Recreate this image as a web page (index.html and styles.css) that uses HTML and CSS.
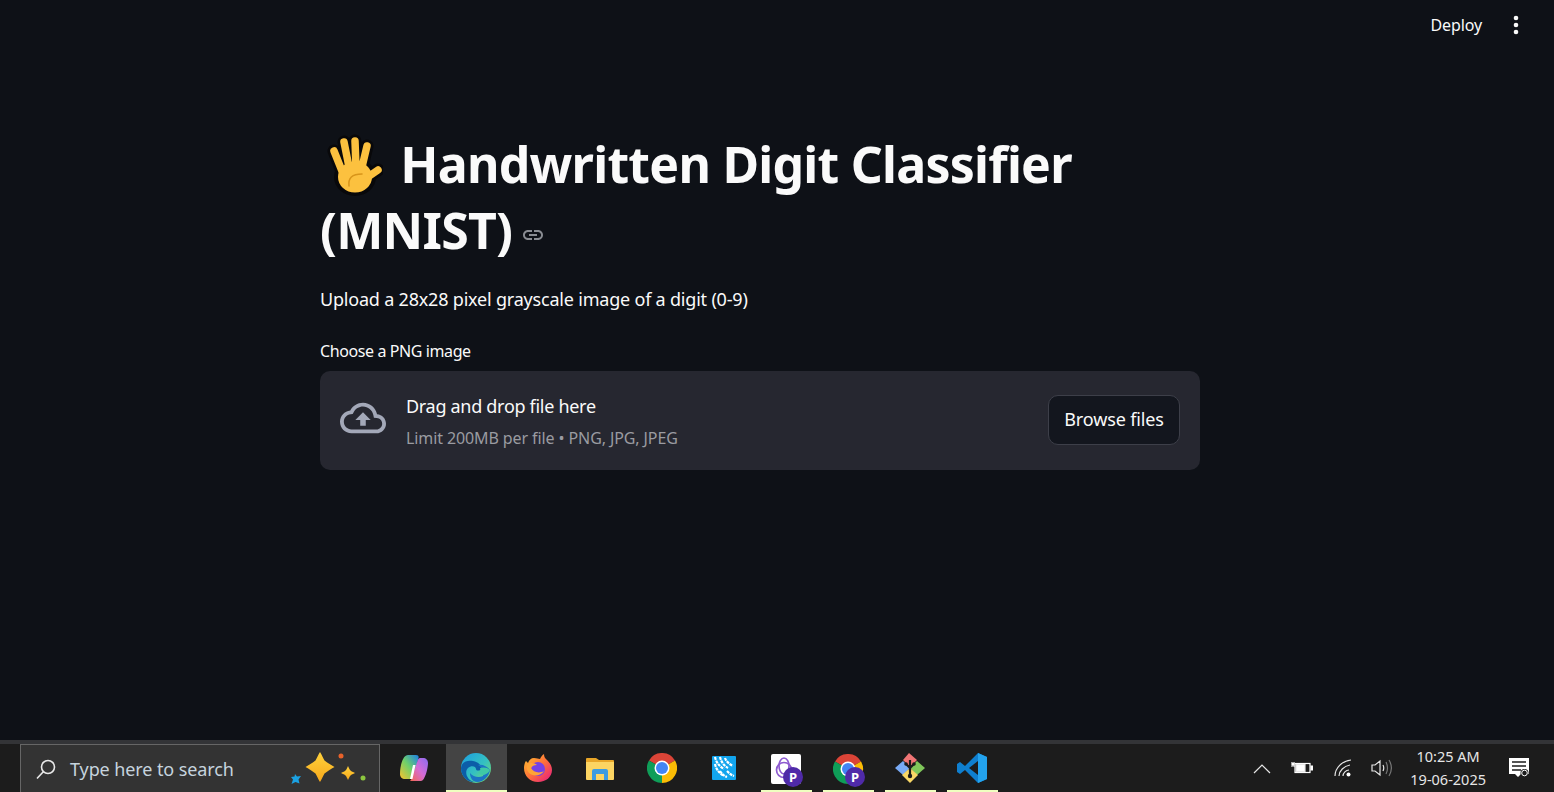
FILE: index.html
```html
<!DOCTYPE html>
<html lang="en">
<head>
  <meta charset="UTF-8" />
  <title>Handwritten Digit Classifier</title>
  <link rel="stylesheet" href="styles.css">
</head>
<body>

<div class="app">
  <div class="page">
    <header class="topbar">
      <span class="deploy">Deploy</span>
      <svg class="kebab" width="8" height="20" viewBox="0 0 8 20"><circle cx="4" cy="3" r="2.3"/><circle cx="4" cy="10" r="2.3"/><circle cx="4" cy="17" r="2.3"/></svg>
    </header>

    <main class="container">
      <h1>
        <svg class="hand" width="56" height="64" viewBox="0 0 56 64">
          <g fill="none" stroke="#08080a" stroke-width="13" stroke-linecap="round">
            <path d="M7 17 15 37M17 8 22 33M28 7 29 33M40 12 35 33M51 36 38 45"/>
          </g>
          <ellipse cx="28" cy="43" rx="21" ry="19" fill="#08080a"/>
          <g fill="none" stroke="#fcc13f" stroke-width="7.5" stroke-linecap="round">
            <path d="M7 17 15 37M17 8 22 33M28 7 29 33M40 12 35 33M51 36 38 45"/>
          </g>
          <ellipse cx="28" cy="43" rx="17" ry="15.500" fill="#fcc13f"/>
          <path d="M22 52c-1-8 3-12 13-12" fill="none" stroke="#d8951a" stroke-width="1.500" stroke-linecap="round"/>
        </svg>
        Handwritten Digit Classifier (MNIST)
        <svg class="anchor" width="24" height="24" viewBox="0 0 24 24"><path d="M3.9 12c0-1.71 1.39-3.1 3.1-3.1h4V7H7c-2.76 0-5 2.24-5 5s2.24 5 5 5h4v-1.9H7c-1.71 0-3.1-1.39-3.1-3.1zM8 13h8v-2H8v2zm9-6h-4v1.9h4c1.71 0 3.1 1.39 3.1 3.1s-1.39 3.1-3.1 3.1h-4V17h4c2.76 0 5-2.24 5-5s-2.24-5-5-5z"/></svg>
      </h1>
      <p class="intro">Upload a 28x28 pixel grayscale image of a digit (0-9)</p>

      <label class="upload-label">Choose a PNG image</label>
      <section class="dropzone">
        <svg class="cloud" width="46" height="46" viewBox="0 0 24 24"><path d="M19.35 10.04C18.67 6.59 15.64 4 12 4 9.11 4 6.6 5.64 5.35 8.04 2.34 8.36 0 10.91 0 14c0 3.31 2.69 6 6 6h13c2.76 0 5-2.24 5-5 0-2.64-2.05-4.78-4.65-4.96zM19 18H6c-2.21 0-4-1.79-4-4 0-2.05 1.53-3.76 3.56-3.97l1.07-.11.5-.95C8.08 7.14 9.94 6 12 6c2.62 0 4.88 1.86 5.39 4.43l.3 1.5 1.53.11c1.56.1 2.78 1.41 2.78 2.96 0 1.65-1.35 3-3 3zM8 13h2.55v3h2.9v-3H16l-4-4z"/></svg>
        <div class="drop-text">
          <div class="drop-title">Drag and drop file here</div>
          <div class="drop-limit">Limit 200MB per file • PNG, JPG, JPEG</div>
        </div>
        <button class="browse">Browse files</button>
      </section>
    </main>
  </div>

  <footer class="taskbar">
    <div class="search">
      <svg class="search-icon" width="22" height="22" viewBox="0 0 22 22"><circle cx="13" cy="9" r="6.500"/><path d="M8.500 13.500 2 20.500"/></svg>
      <span class="search-text">Type here to search</span>
      <svg class="sparkles" width="76" height="36" viewBox="0 0 76 36">
        <defs>
          <linearGradient id="star" x1="0" y1="0" x2="0" y2="1"><stop offset="0" stop-color="#ffd23c"/><stop offset="1" stop-color="#f7a81b"/></linearGradient>
        </defs>
        <path d="M30 1c2 3 3 6 4.500 8.500C37 11.500 41 14 44.500 16c-3.500 2-7.500 4.500-10 6.500C33 25 32 28 30 31c-2-3-3-6-4.500-8.500C23 20.500 19 18 15.500 16c3.500-2 7.500-4.500 10-6.500C27 7 28 4 30 1z" fill="url(#star)"/>
        <path d="M58 15c1 2 1.500 3.500 2.500 4.500 1 1 2.500 1.500 4.500 2.500-2 1-3.500 1.500-4.500 2.500-1 1-1.500 2.500-2.500 4.500-1-2-1.500-3.500-2.500-4.500-1-1-2.500-1.500-4.500-2.500 2-1 3.500-1.500 4.500-2.500 1-1 1.500-2.500 2.500-4.500z" fill="url(#star)"/>
        <path d="M5 23l2 2.500 4-.5-2.500 3.500 1 4-4-1.500-4 2 1.500-4.500-2-2.500 3.500-.5z" fill="#1ba1e2"/>
        <circle cx="51" cy="5" r="2.500" fill="#e8622a"/>
        <circle cx="73" cy="27" r="2.500" fill="#8cc63f"/>
      </svg>
    </div>

    <div class="apps">
      <div class="app-icon">
        <svg width="30" height="28" viewBox="0 0 30 28">
          <defs>
            <linearGradient id="cp1" x1="0" y1="1" x2="1" y2="0"><stop offset="0" stop-color="#f9c22e"/><stop offset=".5" stop-color="#6fd06a"/><stop offset="1" stop-color="#1b7fe8"/></linearGradient>
            <linearGradient id="cp2" x1="0" y1="1" x2="1" y2="0"><stop offset="0" stop-color="#f2664d"/><stop offset=".5" stop-color="#d56bd6"/><stop offset="1" stop-color="#8a6cf0"/></linearGradient>
          </defs>
          <path d="M9 1h8c2 0 3 1 2.500 3L15 22c-.5 2-2 3-4 3H6c-3 0-5-2-5-5C1 11 4 1 9 1z" fill="url(#cp1)"/>
          <path d="M13 27h9c4 0 7-13 7-18 0-3-2-5-5-5h-3c-1 0-2 1-2.500 3L13 23c-.5 2-1 3-2 4z" fill="url(#cp2)"/>
          <path d="M14 11h2.500l-3 14H11z" fill="#fff"/>
        </svg>
      </div>
      <div class="app-icon active">
        <svg class="edge" width="30" height="30" viewBox="0 0 30 30">
          <defs>
            <linearGradient id="edge1" x1="0" y1="0" x2="1" y2="1"><stop offset="0" stop-color="#1b9de2"/><stop offset=".55" stop-color="#35c1c0"/><stop offset="1" stop-color="#7fe05f"/></linearGradient>
          </defs>
          <circle cx="15" cy="15" r="15" fill="url(#edge1)"/>
          <path d="M0 15C1 8 7 7 12 8c6 1 9 5 8 8-1 2-5 2-5 0 0-3-5-4-8-1-4 4-1 12 6 14C6 29 0 23 0 15z" fill="#0c5da8"/>
          <path d="M17 12c4-1 9 1 12 5-1 6-6 12-13 12-4 0-7-4-7-9 3 4 9 5 13 3 2-3-1-9-5-11z" fill="#1c74c4"/>
          <path d="M19 15c3-1 7-1 10 2-1 2-3 4-6 5-3 0-5-1-6-3 2 0 3-2 2-4z" fill="#3fc9a5"/>
        </svg>
      </div>
      <div class="app-icon">
        <svg width="30" height="30" viewBox="0 0 30 30">
          <defs>
            <linearGradient id="fx1" x1="0" y1="0" x2="1" y2="1"><stop offset="0" stop-color="#ffc52e"/><stop offset=".5" stop-color="#ff7139"/><stop offset="1" stop-color="#e31587"/></linearGradient>
          </defs>
          <path d="M15 29C7 29 1 23 1 15c0-3 1-6 2-7l2 2c1-3 3-5 6-5 3 0 4 1 6 1 1-2 2-4 4-5 0 3 1 4 3 6 3 3 5 6 5 10 0 7-6 12-14 12z" fill="url(#fx1)"/>
          <circle cx="15" cy="16" r="7" fill="#7542e5"/>
          <path d="M4 12c3-3 8-2 10 0-3 0-5 1-6 3 2 4 8 6 13 3-3 5-11 6-15 2-2-2-3-5-2-8z" fill="#ffa436"/>
        </svg>
      </div>
      <div class="app-icon">
        <svg width="28" height="24" viewBox="0 0 28 24">
          <path d="M0 3a1 1 0 0 1 1-1h9l3 2h14a1 1 0 0 1 1 1v2H0z" fill="#e8a628"/>
          <path d="M0 6h28v17a1 1 0 0 1-1 1H1a1 1 0 0 1-1-1z" fill="#fcd462"/>
          <path d="M8 13h12a2 2 0 0 1 2 2v9h-4v-6h-8v6H6v-9a2 2 0 0 1 2-2z" fill="#3c9be0"/>
          <path d="M10 20h8v4h-8z" fill="#fcd462"/>
        </svg>
      </div>
      <div class="app-icon">
        <svg width="30" height="30" viewBox="0 0 30 30"><use href="#chrome-mark"/></svg>
      </div>
      <div class="app-icon">
        <svg width="24" height="24" viewBox="0 0 24 24">
          <rect width="24" height="24" rx="1" fill="#12a5ee"/>
          <g fill="none" stroke="#fff" stroke-width="2.200" stroke-dasharray="3 .8">
            <path d="M3 1c1 5 4 9 9 12M8 1c1 4 3 8 8 11M13 2c1 3 4 6 8 8M3 8c1 5 4 9 9 12M8 15c2 3 4 5 7 6M15 15c2 2 4 4 7 5"/>
          </g>
        </svg>
      </div>
      <div class="app-icon running">
        <svg class="badged" width="34" height="34" viewBox="0 0 34 34">
          <rect x="0" y="0" width="30" height="30" rx="2" fill="#fff"/>
          <g fill="none" stroke="#8e5bd0" stroke-width="1.700">
            <ellipse cx="13" cy="12" rx="5" ry="8"/>
            <circle cx="13" cy="16" r="7.500"/>
          </g>
          <circle cx="22" cy="23" r="10" fill="#4f2aa8"/>
          <text class="badge-letter" x="22" y="27.500">P</text>
        </svg>
      </div>
      <div class="app-icon running">
        <svg class="badged" width="34" height="34" viewBox="0 0 34 34">
          <use href="#chrome-mark"/>
          <circle cx="22" cy="23" r="10" fill="#4f2aa8"/>
          <text class="badge-letter" x="22" y="27.500">P</text>
        </svg>
      </div>
      <div class="app-icon running">
        <svg width="30" height="30" viewBox="0 0 30 30">
          <path d="M15 14 8 7l6-7 8 7z" fill="#f07575"/>
          <path d="M15 15 8 8l-8 7 8 7z" fill="#79aaf5"/>
          <path d="M15 15l7-7 8 7-8 7z" fill="#7fc65a"/>
          <path d="M15 15l8 7-8 8-8-8z" fill="#f9d766"/>
          <path d="M15 7v17M15 15l-4-4M15 15l4-4" stroke="#1b1b1b" stroke-width="2.200" fill="none"/>
          <circle cx="15" cy="23" r="2.200" fill="#1b1b1b"/>
          <circle cx="11" cy="11" r="1.800" fill="#1b1b1b"/>
          <circle cx="19" cy="11" r="1.800" fill="#1b1b1b"/>
        </svg>
      </div>
      <div class="app-icon running">
        <svg width="30" height="30" viewBox="0 0 30 30">
          <path d="M21 0l9 4v22l-9 4L8 17l-5 4-3-2v-8l3-2 5 4z" fill="#0f7fcf"/>
          <path d="M21 0l9 4v22l-9 4z" fill="#23a3ee"/>
          <path d="M21 8 12 15l9 7z" fill="#1c1c1c"/>
        </svg>
      </div>
    </div>

    <div class="tray">
      <svg class="tray-icon" width="20" height="14" viewBox="0 0 20 14"><path d="M2 12 10 4l8 8"/></svg>
      <svg class="tray-icon battery" width="22" height="14" viewBox="0 0 22 14">
        <rect x="4" y="2.500" width="15" height="9" fill="none" stroke="#fff"/>
        <rect x="5" y="3.500" width="9" height="7" fill="#fff"/>
        <path d="M20 5h1.500v4H20zM0 5h4M2 2v3M1 1v3M3 1v3" fill="#fff" stroke="#fff"/>
      </svg>
      <svg class="tray-icon wifi" width="20" height="18" viewBox="0 0 20 18">
        <path d="M1 17C1 9 8 2 17 1M5 17c0-5 5-10 11-11M9 17c0-3 3-6 6-6" stroke-width="1.200"/>
        <circle class="wifi-dot" cx="14.500" cy="15.500" r="2"/>
      </svg>
      <svg class="tray-icon speaker" width="22" height="18" viewBox="0 0 22 18">
        <path d="M1 6h3l5-4v14l-5-4H1zM12 6c1 2 1 4 0 6"/>
        <path class="muted" d="M15 3c2 4 2 8 0 12M18 1c3 5 3 11 0 16"/>
      </svg>
      <div class="clock">
        <span>10:25 AM</span>
        <span>19-06-2025</span>
      </div>
      <svg class="notify" width="22" height="22" viewBox="0 0 22 22">
        <path d="M1 1h20v16h-8l-3 3-3-3H1z" fill="#fff"/>
        <path d="M4 5h14M4 9h14M4 13h9" stroke="#1c1c1c" stroke-width="1.300"/>
        <circle cx="16.500" cy="16" r="4" fill="#1c1c1c"/>
        <circle cx="16.500" cy="16" r="2.800" fill="none" stroke="#fff" stroke-width="1"/>
      </svg>
    </div>
  </footer>
</div>

<svg class="defs" width="0" height="0">
  <defs>
    <g id="chrome-mark">
      <path d="M15 15 2 7.500A15 15 0 0 1 28 7.500z" fill="#db4437"/>
      <path d="M15 15 2 7.500A15 15 0 0 0 15 30z" fill="#0f9d58"/>
      <path d="M15 15 28 7.500A15 15 0 0 1 15 30z" fill="#fbbc05"/>
      <circle cx="15" cy="15" r="7.500" fill="#fff"/>
      <circle cx="15" cy="15" r="6" fill="#4285f4"/>
    </g>
  </defs>
</svg>

</body>
</html>
```

FILE: styles.css
```css
* {
  box-sizing: border-box;
}

body {
  margin: 0;
  background-color: #0e1117;
  color: #fafafa;
  font-family: "Noto Sans", "Open Sans", sans-serif;
}

.app {
  display: flex;
  flex-direction: column;
  height: 792px;
  overflow: hidden;
}

.page {
  flex: 1;
}

.defs {
  display: block;
  height: 0;
}

/* top right toolbar */
.topbar {
  display: flex;
  justify-content: flex-end;
  align-items: center;
  gap: 30px;
  height: 50px;
  padding-right: 34px;
}

.deploy {
  font-size: 16px;
  letter-spacing: -0.1px;
}

.kebab {
  fill: #fafafa;
}

.container {
  width: 880px;
  margin-left: 320px;
  padding-top: 81px;
}

h1 {
  margin: 0 0 16px;
  font-size: 50px;
  line-height: 66px;
  font-weight: 700;
  letter-spacing: -0.75px;
}

.hand {
  margin: -13px 5px -7px 7px;
  vertical-align: middle;
}

.anchor {
  fill: #8a8d93;
  margin-left: -4px;
  vertical-align: 2px;
}

.intro {
  margin: 0 0 20px;
  font-size: 18px;
  line-height: 40px;
  letter-spacing: -0.2px;
}

.upload-label {
  display: block;
  height: 32px;
  font-size: 16px;
  line-height: 24px;
  letter-spacing: -0.4px;
}

.dropzone {
  display: flex;
  align-items: center;
  height: 99px;
  padding: 0 20px;
  background-color: #262730;
  border-radius: 10px;
}

.cloud {
  flex-shrink: 0;
  margin-bottom: 5px;
  fill: #a3a8b8;
}

.drop-text {
  flex: 1;
  margin-left: 20px;
  margin-bottom: 2px;
}

.drop-title {
  font-size: 18px;
  line-height: 30px;
  letter-spacing: -0.3px;
}

.drop-limit {
  margin-top: 6px;
  font-size: 16px;
  line-height: 22px;
  letter-spacing: -0.1px;
  color: #9a9ba1;
}

.browse {
  width: 132px;
  height: 50px;
  margin-bottom: 2px;
  padding: 0 0 2px;
  background-color: #13161e;
  border: 1px solid #3d3f49;
  border-radius: 10px;
  color: #fafafa;
  font-family: inherit;
  font-size: 18px;
  letter-spacing: -0.15px;
}

/* windows taskbar */
.taskbar {
  display: flex;
  align-items: stretch;
  height: 52px;
  padding-left: 20px;
  background-color: #1c1c1c;
  border-top: 4px solid #333437;
}

.search {
  display: flex;
  align-items: center;
  width: 360px;
  padding-left: 14px;
  background-color: #333;
  border: 1px solid #666;
  border-bottom: none;
}

.search-icon {
  fill: none;
  stroke: #e8e8e8;
  stroke-width: 1.6;
}

.search-text {
  flex: 1;
  margin-left: 13px;
  font-size: 18px;
  letter-spacing: -0.1px;
  color: #c6d3de;
}

.sparkles {
  margin-right: 13px;
}

.apps {
  display: flex;
  margin-left: 3px;
}

.app-icon {
  position: relative;
  display: flex;
  align-items: center;
  justify-content: center;
  width: 62px;
}

.app-icon.active {
  width: 61px;
  margin-left: 1px;
  background-color: #444;
}

.edge {
  margin-right: 1px;
}

.app-icon.active::after,
.app-icon.running::after {
  content: "";
  position: absolute;
  left: 6px;
  right: 5px;
  bottom: 0;
  height: 2px;
  background-color: #efffc0;
}

.app-icon.active::after {
  left: 0;
  right: 0;
}

.badged {
  margin: 6px 0 0 4px;
}

.badge-letter {
  fill: #fff;
  font-size: 13px;
  font-weight: 700;
  text-anchor: middle;
}

.tray {
  display: flex;
  align-items: center;
  margin-left: auto;
  padding-right: 24px;
}

.tray-icon {
  fill: none;
  stroke: #e6e6e6;
  stroke-width: 1.2;
}

.tray-icon.battery {
  margin-left: 19px;
}

.tray-icon.wifi {
  margin-left: 21px;
}

.tray-icon.speaker {
  margin-left: 17px;
}

.wifi-dot {
  fill: #fff;
  stroke: none;
}

.muted {
  stroke: #777;
}

.clock {
  display: flex;
  flex-direction: column;
  align-items: center;
  gap: 3px;
  margin-left: 17px;
  margin-bottom: 2px;
  font-size: 14.5px;
  line-height: 20px;
  color: #e6e6e6;
}

.notify {
  margin-left: 22px;
}
```
